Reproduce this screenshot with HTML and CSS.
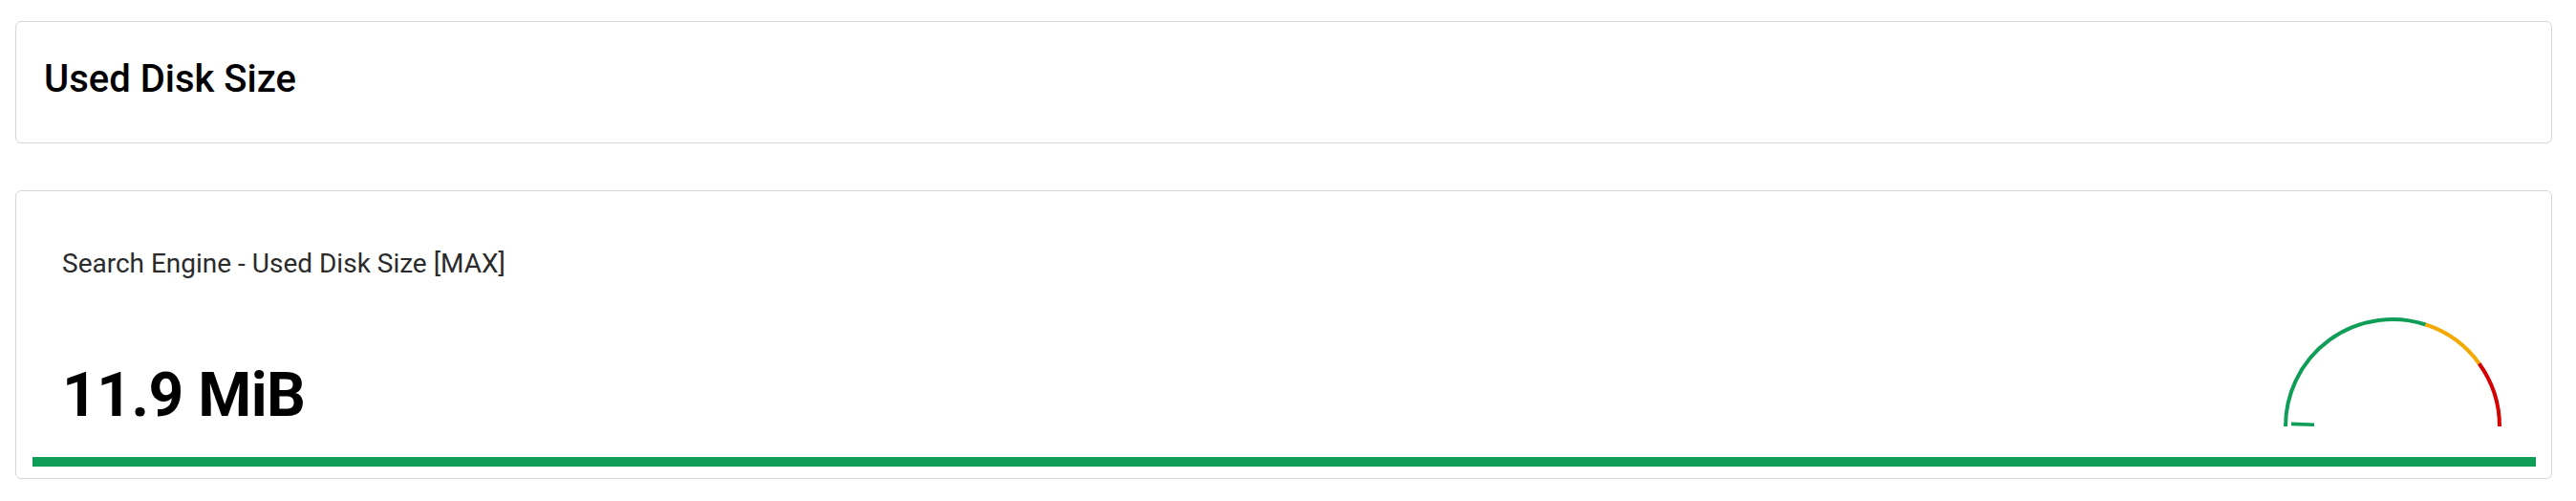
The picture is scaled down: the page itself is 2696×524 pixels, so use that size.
FILE: index.html
```html
<!DOCTYPE html>
<html lang="en">
<head>
<meta charset="utf-8">
<title>Used Disk Size</title>
<link rel="stylesheet" href="styles.css">
</head>
<body>
<main class="page">
  <section class="card card--header">
    <h1 class="card-title">Used Disk Size</h1>
  </section>
  <section class="card card--stat">
    <div class="stat-row">
      <div class="stat-text">
        <div class="stat-label">Search Engine - Used Disk Size [MAX]</div>
        <div class="stat-value">11.9 MiB</div>
      </div>
      <svg class="gauge" width="240" height="120" viewBox="0 0 240 120" aria-hidden="true">
        <path d="M8 118 A112 112 0 0 1 154.6 11.5" fill="none" stroke="#0f9d58" stroke-width="4"/>
        <path d="M154.6 11.5 A112 112 0 0 1 210.6 52.2" fill="none" stroke="#f4a900" stroke-width="4"/>
        <path d="M210.6 52.2 A112 112 0 0 1 232 118" fill="none" stroke="#d50000" stroke-width="4"/>
        <line x1="14" y1="115.4" x2="38" y2="116.2" stroke="#0f9d58" stroke-width="3.6"/>
      </svg>
    </div>
    <div class="stat-bar"></div>
  </section>
</main>
</body>
</html>
```
FILE: styles.css
```css
html, body {
  margin: 0;
  padding: 0;
  background: #ffffff;
}

body {
  font-family: Roboto, "Liberation Sans", Arial, sans-serif;
  color: #000;
}

.page {
  padding: 22px 25px 0 16px;
  display: flex;
  flex-direction: column;
  gap: 49px;
}

.card {
  border: 1px solid #d7d7d7;
  border-radius: 6px;
  background: #fff;
}

.card--header {
  padding: 36px 29px 42px 29px;
}

.card-title {
  margin: 0;
  font-size: 40px;
  line-height: 48px;
  font-weight: 500;
  color: #000;
}

.card--stat {
  padding: 59px 16px 12px 17px;
}

.stat-row {
  display: flex;
  justify-content: space-between;
  align-items: flex-end;
  padding: 0 30px 0 31px;
}

.stat-label {
  font-size: 28px;
  line-height: 34px;
  color: #2b2b2b;
}

.stat-value {
  margin-top: 83px;
  font-size: 64px;
  line-height: 76px;
  font-weight: 700;
  letter-spacing: -0.5px;
  color: #000;
}

.gauge {
  display: block;
  margin-bottom: 4px;
}

.stat-bar {
  margin-top: 26px;
  height: 10px;
  background: #0f9d58;
}
```
